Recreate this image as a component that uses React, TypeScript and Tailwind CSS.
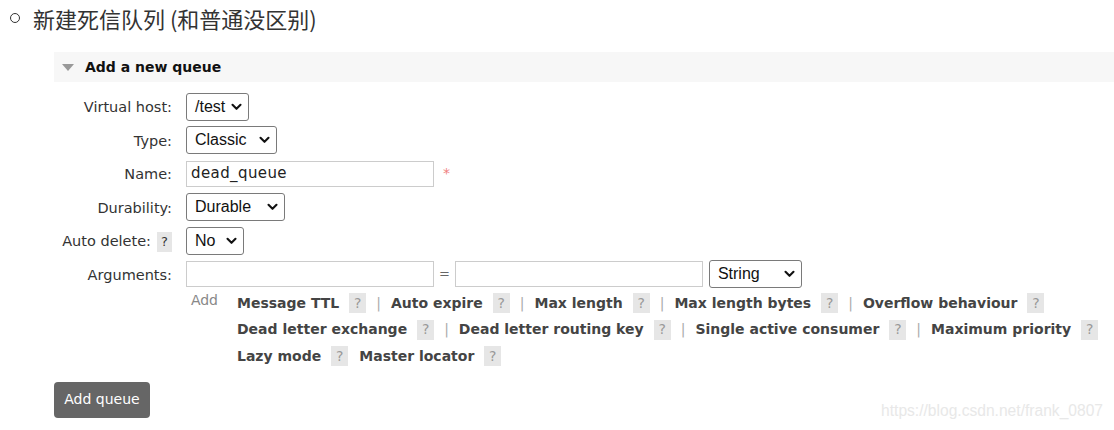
import React from "react";

const Chevron = () => (
  <svg width="11" height="8" viewBox="0 0 11 8" className="shrink-0">
    <path d="M1.5 1.8 L5.5 5.8 L9.5 1.8" fill="none" stroke="#111" strokeWidth="2.1" strokeLinecap="round" strokeLinejoin="round" />
  </svg>
);

function Sel({ label, w }: { label: string; w: string }) {
  return (
    <div
      className={`${w} h-[28px] flex items-center justify-between pl-[8px] pr-[6px] bg-white border border-[#7a7a7a] rounded-[3px] text-[16px] text-[#111]`}
      style={{ fontFamily: '"Liberation Sans", Arial, sans-serif' }}
    >
      <span>{label}</span>
      <Chevron />
    </div>
  );
}

function Q() {
  return (
    <span className="inline-flex items-center justify-center w-[17px] h-[20px] bg-[#e6e6e6] text-[#999] text-[14px] font-normal">?</span>
  );
}

function Link({ t, sep = true }: { t: string; sep?: boolean }) {
  return (
    <span className="inline-flex items-center">
      <span className="font-bold text-[#444]">{t}</span>
      <span className="ml-[10px]"><Q /></span>
      {sep ? <span className="mx-[10px] text-[#aaa] font-normal">|</span> : <span className="w-[11px]" />}
    </span>
  );
}

export default function App() {
  const verdana = { fontFamily: '"DejaVu Sans", Verdana, sans-serif' };
  return (
    <div className="w-[1114px] h-[430px] bg-white relative overflow-hidden" style={verdana}>
      <div className="flex items-center h-[36px] pl-[10px]">
        <span className="w-[10px] h-[10px] rounded-full border border-[#333] mr-[13px]" />
        <span className="text-[22px] text-[#333]" style={{ fontFamily: '"Noto Sans CJK SC", "Noto Sans", sans-serif' }}>
          新建死信队列 (和普通没区别)
        </span>
      </div>

      <div className="ml-[54px] mt-[16px]">
        <div className="h-[30px] bg-[#f7f7f7] flex items-center pl-[8px]">
          <svg width="12" height="7" viewBox="0 0 12 7" className="mr-[11px]">
            <path d="M0 0 L12 0 L6 7 Z" fill="#999" />
          </svg>
          <span className="font-bold text-[14px] text-[#111]">Add a new queue</span>
        </div>

        <div className="mt-[8px] text-[14.5px] text-[#333]">
          <div className="flex items-center h-[33px]">
            <div className="w-[118px] text-right pt-[3px]">Virtual host:</div>
            <div className="ml-[14px]"><Sel label="/test" w="w-[63px]" /></div>
          </div>
          <div className="flex items-center h-[34px]">
            <div className="w-[118px] text-right pt-[3px]">Type:</div>
            <div className="ml-[14px]"><Sel label="Classic" w="w-[91px]" /></div>
          </div>
          <div className="flex items-center h-[33px]">
            <div className="w-[118px] text-right pt-[3px]">Name:</div>
            <div className="ml-[14px] w-[248px] h-[26px] border border-[#ccc] flex items-center pl-[4px] text-[15px] text-[#222] tracking-[0.4px]">
              dead_queue
            </div>
            <span className="ml-[9px] text-[#f08080] text-[14px]">*</span>
          </div>
          <div className="flex items-center h-[34px]">
            <div className="w-[118px] text-right pt-[3px]">Durability:</div>
            <div className="ml-[14px]"><Sel label="Durable" w="w-[99px]" /></div>
          </div>
          <div className="flex items-center h-[33px]">
            <div className="w-[118px] flex justify-end items-center pt-[3px]">
              <span>Auto delete:</span>
              <span className="ml-[6px] inline-flex items-center justify-center w-[15px] h-[20px] bg-[#e6e6e6] text-[#333] text-[13px]">?</span>
            </div>
            <div className="ml-[14px]"><Sel label="No" w="w-[58px]" /></div>
          </div>
          <div className="flex items-center h-[34px]">
            <div className="w-[118px] text-right pt-[3px]">Arguments:</div>
            <div className="ml-[14px] w-[248px] h-[26px] border border-[#ccc]" />
            <span className="mx-[5px] text-[#666] text-[13px]">=</span>
            <div className="w-[248px] h-[26px] border border-[#ccc]" />
            <div className="ml-[6px]"><Sel label="String" w="w-[93px]" /></div>
          </div>

          <div className="flex -mt-px text-[14px]">
            <div className="w-[164px] text-right text-[#888] text-[14px] font-normal">Add</div>
            <div className="ml-[19px] flex flex-col">
              <div className="flex items-center h-[26.5px]">
                <Link t="Message TTL" />
                <Link t="Auto expire" />
                <Link t="Max length" />
                <Link t="Max length bytes" />
                <Link t="Overflow behaviour" sep={false} />
              </div>
              <div className="flex items-center h-[26.5px]">
                <Link t="Dead letter exchange" />
                <Link t="Dead letter routing key" />
                <Link t="Single active consumer" />
                <Link t="Maximum priority" sep={false} />
              </div>
              <div className="flex items-center h-[26.5px]">
                <Link t="Lazy mode" sep={false} />
                <Link t="Master locator" sep={false} />
              </div>
            </div>
          </div>

          <div className="mt-[12px]">
            <button className="w-[96px] h-[36px] bg-[#666] text-white text-[14px] rounded-[4px]" style={verdana}>
              Add queue
            </button>
          </div>
        </div>
      </div>

      <div
        className="absolute right-[11px] bottom-[8px] text-[15.6px] text-[#e8e8e8]"
        style={{ fontFamily: '"Liberation Sans", Arial, sans-serif' }}
      >
        https://blog.csdn.net/frank_0807
      </div>
    </div>
  );
}
